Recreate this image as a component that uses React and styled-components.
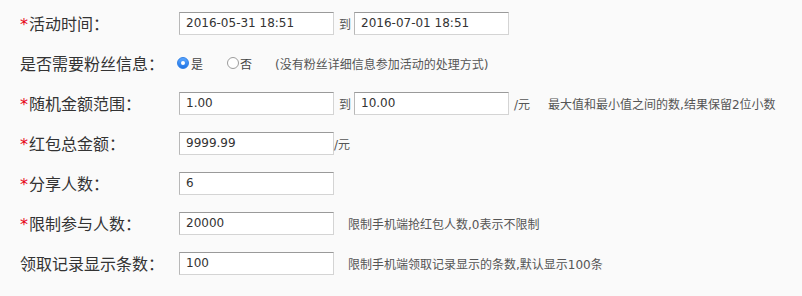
import styled, { createGlobalStyle } from 'styled-components';

const GlobalStyle = createGlobalStyle`
    html, body {
        margin: 0;
        padding: 0;
        background: #fafafa;
    }
    body {
        font-family: 'DejaVu Sans', 'Noto Sans CJK SC', sans-serif;
        color: #333;
    }
`;

const Form = styled.div`
    padding: 3px 0 0 20px;
    width: 802px;
    height: 296px;
    box-sizing: border-box;
    background: #fafafa;
`;

const Row = styled.div`
    display: flex;
    align-items: center;
    height: 40px;
`;

const Label = styled.div`
    width: 159px;
    flex-shrink: 0;
    font-size: 16px;
    color: #333;
    white-space: nowrap;
    font-family: 'Noto Sans CJK SC', sans-serif;
`;

const Star = styled.span`
    color: #e60012;
    font-family: 'DejaVu Sans', sans-serif;
    font-size: 16px;
    margin-right: 1px;
`;

const Field = styled.div`
    display: flex;
    align-items: center;
`;

const TextInput = styled.input`
    box-sizing: border-box;
    width: 155px;
    height: 23px;
    padding: 0 0 0 6px;
    margin: 0;
    border: 1px solid #d4d4d4;
    border-top-color: #9a9a9a;
    border-left-color: #b8b8b8;
    background: #fff;
    color: #333;
    font-family: 'DejaVu Sans', 'Noto Sans CJK SC', sans-serif;
    font-size: 12px;
    outline: none;
`;

const Small = styled.span`
    font-size: 12px;
    color: #555;
    white-space: nowrap;
    margin-left: ${(p) => p.left || 0}px;
    margin-right: ${(p) => p.right || 0}px;
`;

const RadioGroup = styled.div`
    display: flex;
    align-items: center;
    margin-left: -2px;
`;

const RadioOption = styled.label`
    display: flex;
    align-items: center;
    font-size: 12px;
    color: #444;
    margin-right: ${(p) => p.gap}px;
`;

const RadioDot = styled.span`
    box-sizing: border-box;
    width: 12px;
    height: 12px;
    border-radius: 50%;
    margin-right: ${(p) => (p.checked ? 2 : 1)}px;
    display: flex;
    align-items: center;
    justify-content: center;
    border: 1px solid ${(p) => (p.checked ? '#2f7fe6' : '#9c9c9c')};
    background: ${(p) =>
        p.checked ? 'linear-gradient(#5aa6ff, #1f74e6)' : '#fff'};
    &::after {
        content: '';
        width: 4px;
        height: 4px;
        border-radius: 50%;
        background: #fff;
        display: ${(p) => (p.checked ? 'block' : 'none')};
    }
`;

export default function App() {
    return (
        <Form>
            <GlobalStyle />
            <Row>
                <Label>
                    <Star>*</Star>活动时间：
                </Label>
                <Field>
                    <TextInput defaultValue="2016-05-31 18:51" />
                    <Small left={5} right={3}>
                        到
                    </Small>
                    <TextInput defaultValue="2016-07-01 18:51" />
                </Field>
            </Row>
            <Row>
                <Label>是否需要粉丝信息：</Label>
                <Field>
                    <RadioGroup>
                        <RadioOption gap={24}>
                            <RadioDot checked />是
                        </RadioOption>
                        <RadioOption gap={23}>
                            <RadioDot />否
                        </RadioOption>
                    </RadioGroup>
                    <Small>(没有粉丝详细信息参加活动的处理方式)</Small>
                </Field>
            </Row>
            <Row>
                <Label>
                    <Star>*</Star>随机金额范围：
                </Label>
                <Field>
                    <TextInput defaultValue="1.00" />
                    <Small left={5} right={3}>
                        到
                    </Small>
                    <TextInput defaultValue="10.00" />
                    <Small left={5}>/元</Small>
                    <Small left={18}>最大值和最小值之间的数,结果保留2位小数</Small>
                </Field>
            </Row>
            <Row>
                <Label>
                    <Star>*</Star>红包总金额：
                </Label>
                <Field>
                    <TextInput defaultValue="9999.99" />
                    <Small>/元</Small>
                </Field>
            </Row>
            <Row>
                <Label>
                    <Star>*</Star>分享人数：
                </Label>
                <Field>
                    <TextInput defaultValue="6" />
                </Field>
            </Row>
            <Row>
                <Label>
                    <Star>*</Star>限制参与人数：
                </Label>
                <Field>
                    <TextInput defaultValue="20000" />
                    <Small left={14}>限制手机端抢红包人数,0表示不限制</Small>
                </Field>
            </Row>
            <Row>
                <Label>领取记录显示条数：</Label>
                <Field>
                    <TextInput defaultValue="100" />
                    <Small left={14}>限制手机端领取记录显示的条数,默认显示100条</Small>
                </Field>
            </Row>
        </Form>
    );
}
